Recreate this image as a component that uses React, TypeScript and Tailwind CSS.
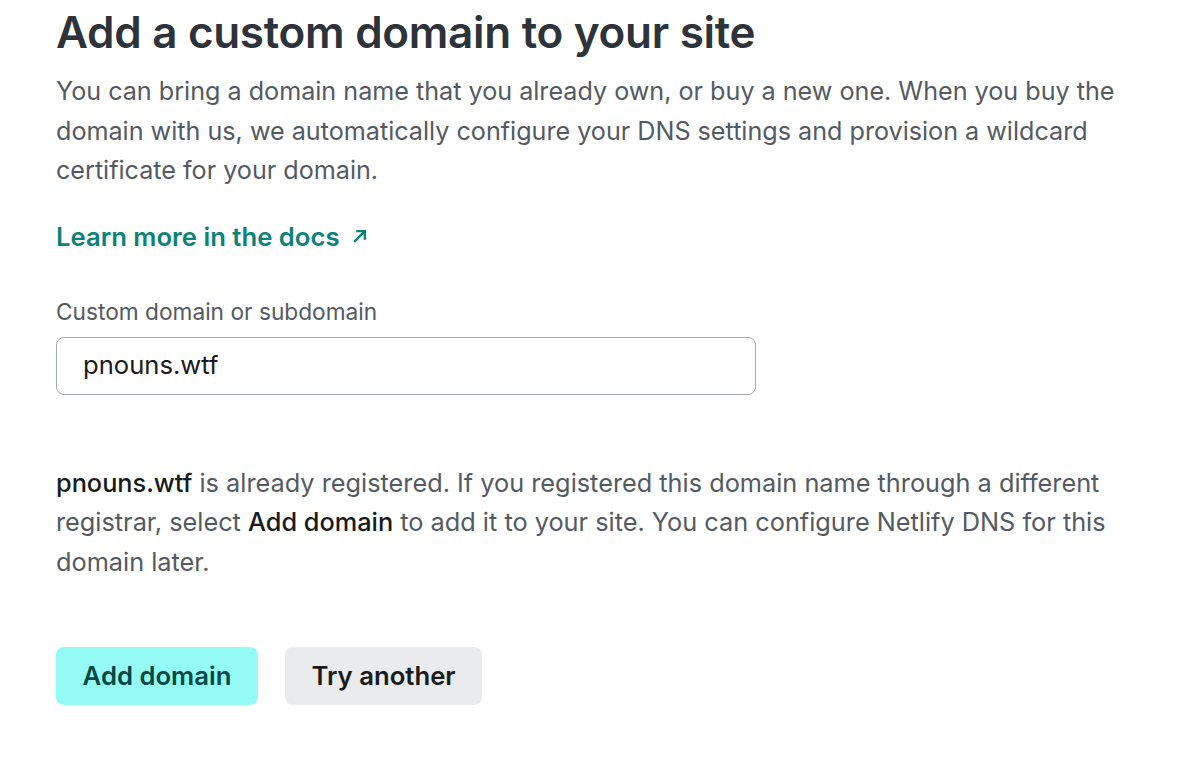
export default function App() {
  return (
    <div
      className="min-h-[770px] w-[1200px] bg-white px-[56px] pt-[6px] text-[#545a61]"
      style={{ fontFamily: "Inter, 'Noto Sans', sans-serif" }}
    >
      <h1 className="text-[44px] font-semibold leading-[52px] tracking-[-0.3px] text-[#2d3338]">
        Add a custom domain to your site
      </h1>
      <p className="mt-[14px] max-w-[1090px] text-[25.15px] leading-[39.5px] text-[#545a61]">
        You can bring a domain name that you already own, or buy a new one. When you buy the
        domain with us, we automatically configure your DNS settings and provision a wildcard
        certificate for your domain.
      </p>
      <a className="mt-[26px] flex items-center gap-[12px] text-[25.7px] font-semibold leading-[40px] text-[#0b8378]">
        Learn more in the docs
        <svg width="15" height="15" viewBox="0 0 14 14" fill="none" stroke="currentColor" strokeWidth="2.2">
          <path d="M2 12L12 2M4 2h8v8" />
        </svg>
      </a>
      <label className="mt-[40px] block text-[22.7px] leading-[30px] text-[#545a61]">
        Custom domain or subdomain
      </label>
      <div className="mt-[10px] flex h-[58px] w-[700px] items-center rounded-[8px] border border-[#a3a9ae] px-[26px] text-[25.6px] text-[#181a1c]">
        pnouns.wtf
      </div>
      <p className="mt-[68px] max-w-[1090px] text-[25.3px] leading-[39.5px] text-[#545a61]">
        <span className="font-medium text-[#181a1c]">pnouns.wtf</span> is already registered. If you
        registered this domain name through a different registrar, select{" "}
        <span className="font-medium text-[#181a1c]">Add domain</span> to add it to your site. You can
        configure Netlify DNS for this domain later.
      </p>
      <div className="mt-[66px] flex gap-[27px]">
        <button className="flex h-[58px] w-[202px] items-center justify-center rounded-[8px] bg-[#94fbf4] text-[25.7px] font-semibold text-[#014847]">
          Add domain
        </button>
        <button className="flex h-[58px] w-[197px] items-center justify-center rounded-[8px] bg-[#e9ebed] text-[25.7px] font-semibold text-[#181a1c]">
          Try another
        </button>
      </div>
    </div>
  );
}
